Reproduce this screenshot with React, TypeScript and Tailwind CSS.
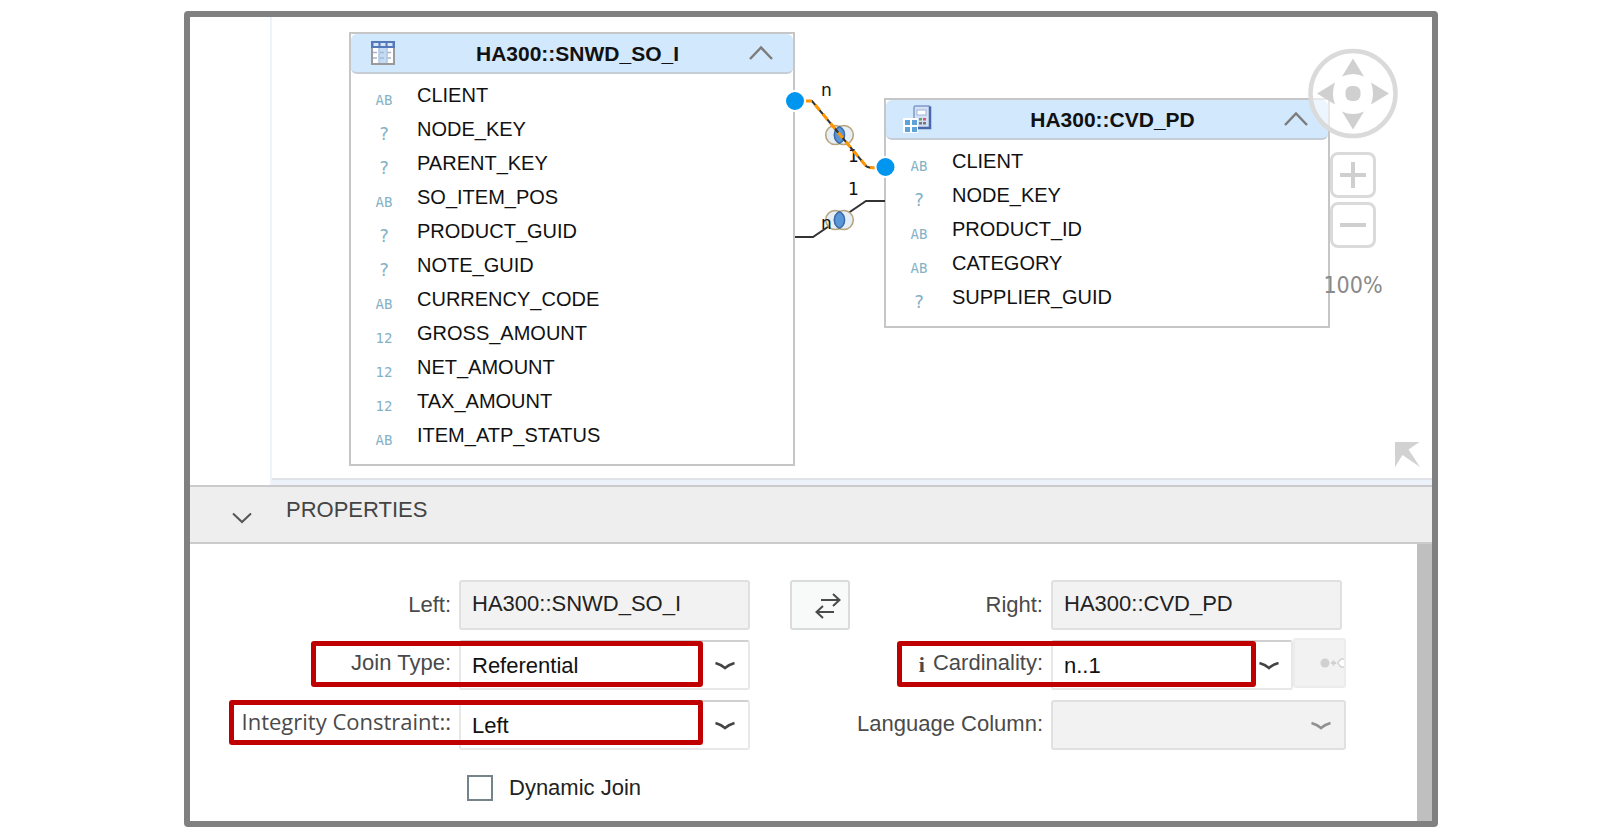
import type { ReactNode } from 'react';

type ColumnType = 'AB' | '?' | '12';

type Column = { type: ColumnType; name: string };

const salesOrderItem: Column[] = [
  { type: 'AB', name: 'CLIENT' },
  { type: '?', name: 'NODE_KEY' },
  { type: '?', name: 'PARENT_KEY' },
  { type: 'AB', name: 'SO_ITEM_POS' },
  { type: '?', name: 'PRODUCT_GUID' },
  { type: '?', name: 'NOTE_GUID' },
  { type: 'AB', name: 'CURRENCY_CODE' },
  { type: '12', name: 'GROSS_AMOUNT' },
  { type: '12', name: 'NET_AMOUNT' },
  { type: '12', name: 'TAX_AMOUNT' },
  { type: 'AB', name: 'ITEM_ATP_STATUS' },
];

const product: Column[] = [
  { type: 'AB', name: 'CLIENT' },
  { type: '?', name: 'NODE_KEY' },
  { type: 'AB', name: 'PRODUCT_ID' },
  { type: 'AB', name: 'CATEGORY' },
  { type: '?', name: 'SUPPLIER_GUID' },
];

function TableIcon() {
  return (
    <svg width="24" height="24" viewBox="0 0 24 24" aria-hidden="true">
      <rect x="1" y="1" width="22" height="22" fill="#fff" stroke="#9a9a9a" strokeWidth="2" />
      <rect x="8" y="7" width="8" height="15" fill="#c3dcf5" />
      <rect x="0" y="0" width="24" height="7" fill="#5379b8" />
      <path d="M2.500 3.500h5M9.500 3.500h5M16.500 3.500h5" stroke="#d9e6f7" strokeWidth="3" />
      <path d="M2 11.500h20M2 17h20" stroke="#a3b6d2" strokeWidth="1.500" strokeDasharray="4 3" />
      <path d="M8 7v15M16 7v15" stroke="#b4c3d8" strokeWidth="1.500" />
    </svg>
  );
}

function CalcViewIcon() {
  return (
    <svg width="30" height="28" viewBox="0 0 30 28" aria-hidden="true">
      <rect x="11" y="1" width="16" height="22" rx="1.500" fill="#d4e0f3" stroke="#7f9acb" strokeWidth="1.500" />
      <path d="M27 1.500v21.500H12" stroke="#4a69ad" strokeWidth="2.500" fill="none" />
      <rect x="14" y="5" width="9" height="5" fill="#fff" stroke="#9db3da" />
      <rect x="16" y="13" width="3" height="2.500" fill="#6aa36a" />
      <rect x="20" y="13" width="3" height="2.500" fill="#e0507a" />
      <rect x="16" y="17" width="3" height="2.500" fill="#777" />
      <rect x="20" y="17" width="3" height="2.500" fill="#777" />
      <rect x="0" y="13" width="15" height="15" rx="1" fill="#fff" />
      <path d="M2 15h5v5H2zM9 15h5v5H9zM2 22h5v5H2zM9 22h5v5H9z" fill="#5ea3d8" />
    </svg>
  );
}

function Chevron({ className }: { className: string }) {
  return (
    <svg width="22" height="10" viewBox="0 0 22 10" className={className} aria-hidden="true">
      <path d="M1.500 2Q7 3.500 11 7Q15 3.500 20.500 2" fill="none" stroke="currentColor" strokeWidth="2.500" />
    </svg>
  );
}

type NodeProps = {
  title: string;
  icon: ReactNode;
  columns: Column[];
  className: string;
};

function TableNode({ title, icon, columns, className }: NodeProps) {
  return (
    <section className={`absolute w-[446px] border-2 border-[#c6c6c6] bg-white pb-3 ${className}`}>
      <header className="flex h-10 items-center rounded-md border-b-2 border-[#c6cdd4] bg-[#d2e8fd] pl-4 pr-[19px]">
        <span className="flex w-8 justify-center">{icon}</span>
        <h2 className="flex-1 pl-2 pt-0.5 text-center text-[21px] font-bold text-[#111]">{title}</h2>
        <button type="button" aria-label={`Collapse ${title}`}>
          <svg width="26" height="16" viewBox="0 0 26 16" aria-hidden="true">
            <path d="M2 14L13 2.500L24 14" fill="none" stroke="#7c7c7c" strokeWidth="2.500" />
          </svg>
        </button>
      </header>
      <ul className="pt-1">
        {columns.map((column) => (
          <li key={column.name} className="flex h-[34px] items-center">
            <span
              className={`w-[66px] pt-2.5 text-center font-['DejaVu_Sans_Mono',monospace] leading-5 text-[#85b2c6] ${
                column.type === '?' ? 'text-lg' : 'text-sm'
              }`}
            >
              {column.type}
            </span>
            <span className="text-xl text-[#111]">{column.name}</span>
          </li>
        ))}
      </ul>
    </section>
  );
}

function JoinSymbol({ x, y }: { x: number; y: number }) {
  return (
    <g transform={`translate(${x} ${y})`}>
      <circle cx="-4.300" cy="0" r="9.500" fill="#e6eef8" stroke="#b9a57d" strokeWidth="1.600" />
      <circle cx="4.300" cy="0" r="9.500" fill="#e6eef8" stroke="#b9a57d" strokeWidth="1.600" />
      <path d="M0 -8.400A9.500 9.500 0 0 1 0 8.400A9.500 9.500 0 0 1 0 -8.400Z" fill="#5b97d8" stroke="#3c6ba8" strokeWidth="1.500" />
    </g>
  );
}

function Joins() {
  return (
    <svg
      width="130"
      height="180"
      viewBox="780 70 130 180"
      className="absolute left-[508px] top-[53px] font-['DejaVu_Sans',sans-serif] text-[17px]"
      aria-label="Joins"
    >
      <path d="M795 237H813L866 201H885" fill="none" stroke="#333" strokeWidth="2" />
      <JoinSymbol x={839.5} y={220} />
      <text x="821" y="229" fill="#111">n</text>
      <text x="848" y="195" fill="#111">1</text>

      <text x="821" y="96" fill="#111">n</text>
      <JoinSymbol x={839.5} y={135} />
      <text x="848" y="162" fill="#111">1</text>
      <path d="M805 101H812L866 166Q868 168 876 168" fill="none" stroke="#333" strokeWidth="2" />
      <path
        d="M805 101H812L866 166Q868 168 876 168"
        fill="none"
        stroke="#ff9500"
        strokeWidth="3"
        strokeDasharray="7 5"
      />
      <circle cx="795" cy="101" r="10" fill="#0096f0" stroke="#fff" strokeWidth="2" />
      <circle cx="885.500" cy="167" r="10" fill="#0096f0" stroke="#fff" strokeWidth="2" />
    </svg>
  );
}

function ZoomButton({ label, path }: { label: string; path: string }) {
  return (
    <button
      type="button"
      aria-label={label}
      className="flex size-[46px] items-center justify-center rounded-lg border-[3px] border-[#dadada] bg-white/70"
    >
      <svg width="26" height="26" viewBox="0 0 26 26" aria-hidden="true">
        <path d={path} stroke="#cfcfcf" strokeWidth="4" />
      </svg>
    </button>
  );
}

function CanvasControls() {
  return (
    <div className="absolute right-[33px] top-[31px] flex flex-col items-center">
      <button type="button" aria-label="Pan" className="mb-[13px]">
        <svg width="92" height="91" viewBox="-46 -45.500 92 91" aria-hidden="true">
          <circle r="42.500" fill="#fff" fillOpacity=".6" stroke="#dadada" strokeWidth="4.500" />
          <g fill="#d0d0d0">
            <path d="M0 -35L11 -17Q0 -22 -11 -17Z" />
            <path d="M0 36L11 18Q0 23 -11 18Z" />
            <path d="M-36 0L-18 -11Q-22 0 -18 11Z" />
            <path d="M36 0L18 -11Q22 0 18 11Z" />
            <rect x="-7.500" y="-7.500" width="15" height="15" rx="6" />
          </g>
        </svg>
      </button>
      <div className="flex flex-col gap-1">
        <ZoomButton label="Zoom in" path="M0 13H26M13 0V26" />
        <ZoomButton label="Zoom out" path="M0 13H26" />
      </div>
      <span className="mt-5 font-['DejaVu_Sans_Condensed','Noto_Sans',sans-serif] text-[23px] text-[#8a8a8a]">100%</span>
    </div>
  );
}

const labelClass = 'flex items-center justify-end whitespace-nowrap pr-2 text-[#4a4a4a]';
const readOnlyClass = 'h-[50px] min-w-0 rounded-[3px] border-2 border-[#e0e0e0] bg-[#f2f2f2] pb-0.5 pl-[11px] text-[#222]';
const selectClass =
  'h-[50px] w-full min-w-0 appearance-none rounded-[3px] border-2 border-[#e8e8e8] border-t-[#d0d0d0] bg-white pl-[11px] text-[#111]';
const highlightClass = 'pointer-events-none z-10 rounded-[3px] border-[5px] border-[#c00000]';

function JoinProperties() {
  return (
    <form className="grid flex-1 grid-cols-[269fr_291fr_100fr_201fr_295fr_71fr] content-start gap-y-[10px] pb-[17px] pt-9">
      <label htmlFor="left" className={`col-start-1 row-start-1 pb-0.5 ${labelClass}`}>Left:</label>
      <input id="left" readOnly value="HA300::SNWD_SO_I" className={`col-start-2 row-start-1 ${readOnlyClass}`} />

      <button
        type="button"
        aria-label="Swap tables"
        className="col-start-3 row-start-1 ml-10 flex h-[50px] items-center justify-end rounded-[3px] border-2 border-[#d8dcdc] bg-[#f8fafa] pr-[7px]"
      >
        <svg width="26" height="28" viewBox="0 0 26 28" fill="none" stroke="#4a4a4a" strokeWidth="2" className="mt-0.5" aria-hidden="true">
          <path d="M6 8H24M18 2L24.500 8L18 14" />
          <path d="M19 20H2M8 14L1.500 20L8 26" />
        </svg>
      </button>

      <label htmlFor="right" className={`col-start-4 row-start-1 pb-0.5 ${labelClass}`}>Right:</label>
      <input id="right" readOnly value="HA300::CVD_PD" className={`col-start-5 row-start-1 mr-1 ${readOnlyClass}`} />

      <label htmlFor="join-type" className={`col-start-1 row-start-2 pb-1.5 ${labelClass}`}>Join Type:</label>
      <div className="relative col-start-2 row-start-2">
        <select id="join-type" className={selectClass}>
          <option>Referential</option>
        </select>
        <Chevron className="pointer-events-none absolute right-[14px] top-[21px] text-[#444]" />
      </div>
      <div className={`col-span-2 col-start-1 row-start-2 ml-[121px] mr-[47px] mt-px h-[46px] ${highlightClass}`} />

      <label htmlFor="cardinality" className={`col-start-4 row-start-2 gap-2 pb-1.5 ${labelClass}`}>
        <span className="pt-1 font-['Liberation_Serif',serif] font-bold">i</span>
        Cardinality:
      </label>
      <div className="col-start-5 row-start-2 flex">
        <div className="relative flex-1">
          <select id="cardinality" className={selectClass}>
            <option>n..1</option>
          </select>
          <Chevron className="pointer-events-none absolute right-[13px] top-[21px] text-[#444]" />
        </div>
        <button
          type="button"
          disabled
          aria-label="Propose cardinality"
          className="-mt-0.5 flex h-[50px] w-[53px] items-center justify-end rounded-[3px] border-2 border-[#ececec] bg-[#f2f2f2]"
        >
          <svg width="24" height="12" viewBox="0 0 24 12" aria-hidden="true">
            <circle cx="5" cy="6" r="4.500" fill="#d0d0d0" />
            <path d="M11 6h5M13.500 3.500v5" stroke="#d0d0d0" strokeWidth="2" />
            <path d="M24 2H21L17.500 6L21 10H24" fill="#fff" stroke="#d4d4d4" strokeWidth="1.500" />
          </svg>
        </button>
      </div>
      <div className={`col-span-2 col-start-4 row-start-2 ml-[47px] mr-[90px] mt-px h-[46px] ${highlightClass}`} />

      <label
        htmlFor="constraint"
        className={`col-start-1 row-start-3 pb-2 font-['Open_Sans',sans-serif] ${labelClass}`}
      >
        Integrity Constraint::
      </label>
      <div className="relative col-start-2 row-start-3">
        <select id="constraint" className={selectClass}>
          <option>Left</option>
        </select>
        <Chevron className="pointer-events-none absolute right-[14px] top-[21px] text-[#444]" />
      </div>
      <div className={`col-span-2 col-start-1 row-start-3 ml-[39px] mr-[47px] h-[45px] ${highlightClass}`} />

      <label htmlFor="language" className={`col-start-4 row-start-3 pb-1 ${labelClass}`}>Language Column:</label>
      <div className="relative col-start-5 row-start-3">
        <select id="language" disabled className={`w-full appearance-none ${readOnlyClass}`} />
        <Chevron className="pointer-events-none absolute right-[14px] top-[21px] text-[#909090]" />
      </div>

      <div className="col-start-2 row-start-4 flex items-center gap-4 pl-2 pt-[11px]">
        <input
          id="dynamic-join"
          type="checkbox"
          className="size-[26px] appearance-none border-2 border-[#75838b] bg-white"
        />
        <label htmlFor="dynamic-join" className="text-[#222]">Dynamic Join</label>
      </div>
    </form>
  );
}

export default function App() {
  return (
    <div className="min-h-screen bg-white pb-[10px] pl-[184px] pr-[162px] pt-[11px] font-['Liberation_Sans',Arial,sans-serif]">
      <main className="rounded border-[6px] border-[#808080] bg-white">
        {/* Diagram */}
        <div className="flex">
          <div className="w-20" />
          <div className="flex-1 border-l-2 border-[#edf3f9]">
            <div className="relative h-[463px] overflow-hidden border-b-2 border-[#dfe3e8]">
              <TableNode
                title="HA300::SNWD_SO_I"
                icon={<TableIcon />}
                columns={salesOrderItem}
                className="left-[77px] top-[15px]"
              />
              <TableNode
                title="HA300::CVD_PD"
                icon={<CalcViewIcon />}
                columns={product}
                className="left-[612px] top-[81px]"
              />
              <Joins />
              <CanvasControls />
              <svg width="25" height="25" viewBox="0 0 25 25" className="absolute bottom-[11px] right-3" aria-hidden="true">
                <path d="M0 0H24.500L13.500 7.500L25 25L7.500 13L0 25Z" fill="#d2d2d2" />
              </svg>
            </div>
            <div className="h-[5px] bg-[#edf2fa]" />
          </div>
        </div>

        {/* Properties */}
        <div className="flex h-[59px] items-center border-y-2 border-[#cbcbcb] bg-[#eeeeee] pl-10">
          <button type="button" aria-label="Collapse properties" className="pt-1.5">
            <svg width="24" height="14" viewBox="0 0 24 14" aria-hidden="true">
              <path d="M3 2.500L12 11L21 2.500" fill="none" stroke="#555" strokeWidth="2" />
            </svg>
          </button>
          <h2 className="pb-2.5 pl-8 text-[22px] text-[#444]">PROPERTIES</h2>
        </div>
        <div className="flex text-[22px]">
          <JoinProperties />
          <div className="w-[15px] bg-[#bfbfbf]" />
        </div>
      </main>
    </div>
  );
}
